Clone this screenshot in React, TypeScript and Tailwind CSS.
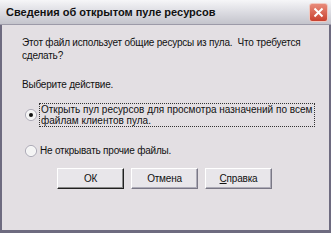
import React from 'react';

const font = { fontFamily: '"Liberation Sans", Arial, sans-serif' };

function Radio({ checked }: { checked?: boolean }) {
  return (
    <svg width="12" height="12" viewBox="0 0 12 12" className="shrink-0">
      <circle cx="6" cy="6" r="5.5" fill="#ffffff" stroke="#a8a6b2" />
      <circle cx="6" cy="6" r="4.5" fill="#f4f4f4" />
      {checked && <circle cx="6" cy="6" r="2" fill="#111111" />}
    </svg>
  );
}

function Button({ children, isDefault }: { children: React.ReactNode; isDefault?: boolean }) {
  return (
    <div
      className={`w-[67px] h-[21px] flex items-center justify-center text-[10px] tracking-[-0.2px] text-[#111] bg-[#e8e6ea] border-t border-l border-t-white border-l-white border-r border-b ${
        isDefault ? 'border-r-[#202020] border-b-[#202020] shadow-[inset_-1px_-1px_0_#888]' : 'border-r-[#7a7886] border-b-[#7a7886] shadow-[inset_-1px_-1px_0_#aeacb8]'
      }`}
    >
      {children}
    </div>
  );
}

export default function App() {
  return (
    <div className="w-[332px] h-[234px] bg-white" style={font}>
      <div className="w-[331px] h-[233px] flex flex-col bg-[#e3dfe3] border-l-[2px] border-r-[2px] border-b-[3px] border-[#6e6b80]">
        <div className="h-[25px] flex items-center justify-between bg-gradient-to-b from-[#f6f6f8] via-[#dcdce2] to-[#c4c4cc] border-b border-[#9c9aa8] -mx-[2px] pl-[6px] pr-[3px]">
          <span className="text-[11px] font-bold text-[#111]">Сведения об открытом пуле ресурсов</span>
          <div className="w-[19px] h-[19px] rounded-[3px] bg-gradient-to-b from-[#e88a7a] to-[#c8402e] border border-[#f0c8c0] flex items-center justify-center">
            <svg width="11" height="11" viewBox="0 0 11 11">
              <path d="M1.5 1.5 L9.5 9.5 M9.5 1.5 L1.5 9.5" stroke="#ffffff" strokeWidth="2" />
            </svg>
          </div>
        </div>
        <div className="flex-1 pt-[11px] pl-[20px] pr-[4px] text-[10px] tracking-[-0.2px] leading-[13px] text-[#111]">
          <p className="w-[300px]">Этот файл использует общие ресурсы из пула.&nbsp; Что требуется сделать?</p>
          <p className="mt-[16px]">Выберите действие.</p>
          <div className="mt-[12px] flex items-center gap-[2px] pl-[3px]">
            <Radio checked />
            <span className="border border-dotted border-[#333] px-[1px] leading-[11px] w-[276px] tracking-[0px]">
              Открыть пул ресурсов для просмотра назначений по всем файлам клиентов пула.
            </span>
          </div>
          <div className="mt-[17px] flex items-center gap-[3px] pl-[3px]">
            <Radio />
            <span>Не открывать прочие файлы.</span>
          </div>
          <div className="mt-[11px] flex gap-[7px] pl-[35px]">
            <Button isDefault>ОК</Button>
            <Button>Отмена</Button>
            <Button>
              <span>
                <span className="underline">С</span>правка
              </span>
            </Button>
          </div>
        </div>
      </div>
    </div>
  );
}
